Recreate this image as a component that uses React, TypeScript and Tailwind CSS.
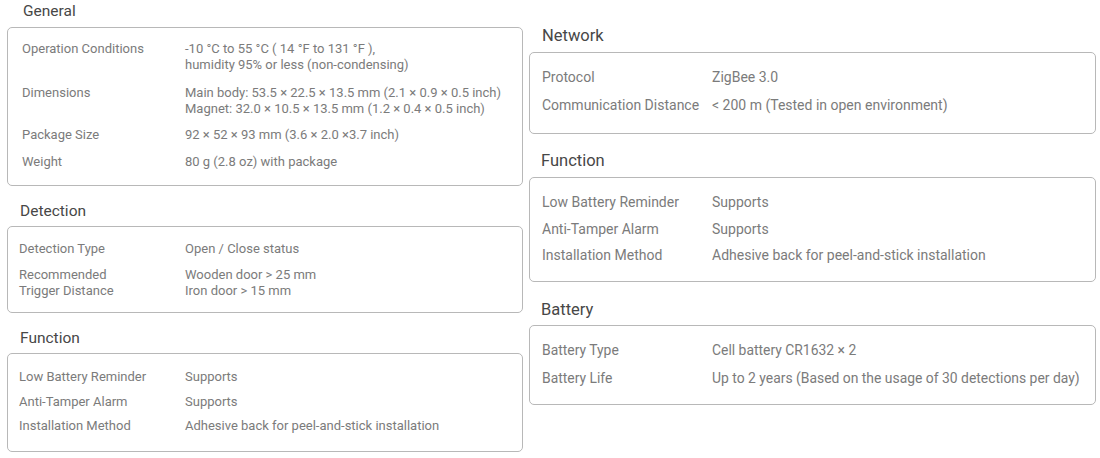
import React from "react";

type Row = {
  label: string[];
  value: string[];
  gap: string;
};

type Section = {
  title: string;
  headClass: string;
  boxClass: string;
  labelClass: string;
  textClass: string;
  rows: Row[];
};

const left: Section[] = [
  {
    title: "General",
    headClass: "mt-[1px] mb-[6px] pl-[16px] text-[15.5px]",
    boxClass: "pt-[13px] pb-[15px] pl-[14px]",
    labelClass: "w-[163px]",
    textClass: "text-[13px]",
    rows: [
      {
        label: ["Operation Conditions"],
        value: ["-10 °C to 55 °C ( 14 °F to 131 °F ),", "humidity 95% or less (non-condensing)"],
        gap: "mt-0",
      },
      {
        label: ["Dimensions"],
        value: [
          "Main body: 53.5 × 22.5 × 13.5 mm (2.1 × 0.9 × 0.5 inch)",
          "Magnet: 32.0 × 10.5 × 13.5 mm (1.2 × 0.4 × 0.5 inch)",
        ],
        gap: "mt-[12px]",
      },
      {
        label: ["Package Size"],
        value: ["92 × 52 × 93 mm (3.6 × 2.0 ×3.7 inch)"],
        gap: "mt-[10px]",
      },
      {
        label: ["Weight"],
        value: ["80 g (2.8 oz) with package"],
        gap: "mt-[11px]",
      },
    ],
  },
  {
    title: "Detection",
    headClass: "mt-[15px] mb-[5px] pl-[13px] text-[15.5px]",
    boxClass: "pt-[14px] pb-[13px] pl-[11px]",
    labelClass: "w-[166px]",
    textClass: "text-[13px]",
    rows: [
      { label: ["Detection Type"], value: ["Open / Close status"], gap: "mt-0" },
      {
        label: ["Recommended", "Trigger Distance"],
        value: ["Wooden door > 25 mm", "Iron door > 15 mm"],
        gap: "mt-[10px]",
      },
    ],
  },
  {
    title: "Function",
    headClass: "mt-[15px] mb-[5px] pl-[13px] text-[15.5px]",
    boxClass: "pt-[15px] pb-[17px] pl-[11px]",
    labelClass: "w-[166px]",
    textClass: "text-[13px]",
    rows: [
      { label: ["Low Battery Reminder"], value: ["Supports"], gap: "mt-0" },
      { label: ["Anti-Tamper Alarm"], value: ["Supports"], gap: "mt-[9px]" },
      {
        label: ["Installation Method"],
        value: ["Adhesive back for peel-and-stick installation"],
        gap: "mt-[8px]",
      },
    ],
  },
];

const right: Section[] = [
  {
    title: "Network",
    headClass: "mt-[26px] mb-[6px] pl-[13px] text-[16.5px]",
    boxClass: "pt-[16px] pb-[20px] pl-[12px]",
    labelClass: "w-[170px]",
    textClass: "text-[14px]",
    rows: [
      { label: ["Protocol"], value: ["ZigBee 3.0"], gap: "mt-0" },
      {
        label: ["Communication Distance"],
        value: ["< 200 m (Tested in open environment)"],
        gap: "mt-[12px]",
      },
    ],
  },
  {
    title: "Function",
    headClass: "mt-[17px] mb-[6px] pl-[12px] text-[16.5px]",
    boxClass: "pt-[16px] pb-[18px] pl-[12px]",
    labelClass: "w-[170px]",
    textClass: "text-[14px]",
    rows: [
      { label: ["Low Battery Reminder"], value: ["Supports"], gap: "mt-0" },
      { label: ["Anti-Tamper Alarm"], value: ["Supports"], gap: "mt-[11px]" },
      {
        label: ["Installation Method"],
        value: ["Adhesive back for peel-and-stick installation"],
        gap: "mt-[10px]",
      },
    ],
  },
  {
    title: "Battery",
    headClass: "mt-[18px] mb-[5px] pl-[12px] text-[16.5px]",
    boxClass: "pt-[16px] pb-[18px] pl-[12px]",
    labelClass: "w-[170px]",
    textClass: "text-[13.9px]",
    rows: [
      { label: ["Battery Type"], value: ["Cell battery CR1632 × 2"], gap: "mt-0" },
      {
        label: ["Battery Life"],
        value: ["Up to 2 years (Based on the usage of 30 detections per day)"],
        gap: "mt-[12px]",
      },
    ],
  },
];

function SpecSection({ section }: { section: Section }) {
  return (
    <section>
      <h3 className={`${section.headClass} leading-[20px] text-[#474747]`}>
        {section.title}
      </h3>
      <div
        className={`${section.boxClass} rounded-[5px] border border-[#b8b8b8] bg-white`}
      >
        {section.rows.map((row, i) => (
          <div
            key={i}
            className={`${row.gap} ${section.textClass} flex leading-[16px] text-[#7b7b7b]`}
          >
            <div className={`${section.labelClass} shrink-0`}>
              {row.label.map((l) => (
                <div key={l}>{l}</div>
              ))}
            </div>
            <div>
              {row.value.map((v) => (
                <div key={v} className="whitespace-nowrap">
                  {v}
                </div>
              ))}
            </div>
          </div>
        ))}
      </div>
    </section>
  );
}

export default function App() {
  return (
    <div className="flex h-[458px] w-[1100px] gap-[6px] bg-white pl-[7px] font-['Roboto',sans-serif]">
      <div className="w-[516px]">
        {left.map((s) => (
          <SpecSection key={s.title} section={s} />
        ))}
      </div>
      <div className="w-[567px]">
        {right.map((s) => (
          <SpecSection key={s.title} section={s} />
        ))}
      </div>
    </div>
  );
}
